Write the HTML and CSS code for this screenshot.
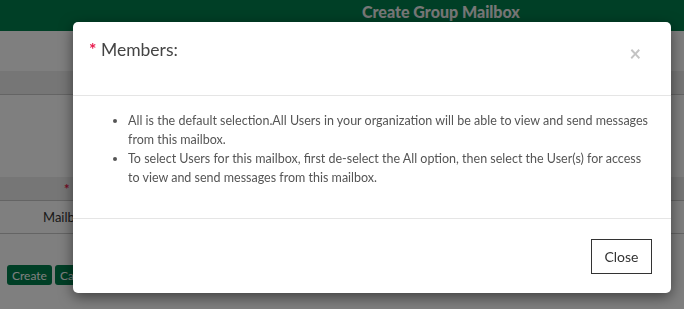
FILE: index.html
```html
<!DOCTYPE html>
<html lang="en">
<head>
  <meta charset="UTF-8">
  <title>Create Group Mailbox</title>
  <link rel="stylesheet" href="styles.css">
</head>
<body>

<header class="top-bar">Create Group Mailbox</header>

<div class="page">
  <div class="form-row"></div>
  <div class="form-row shaded"></div>
  <div class="form-row tall"></div>
  <div class="form-row shaded">
    <span class="field-label"><span class="req">*</span> Members:</span>
  </div>
  <div class="form-row name-row">
    <span class="field-label">Mailbox Name:</span>
  </div>
  <div class="actions">
    <button class="btn-green">Create</button>
    <button class="btn-green">Cancel</button>
  </div>
</div>

<div class="backdrop"></div>

<!-- Members help dialog -->
<div class="modal">
  <div class="modal-header">
    <h4><span class="req">*</span> Members:</h4>
    <span class="close-x">&times;</span>
  </div>
  <div class="modal-body">
    <ul>
      <li>All is the default selection.All Users in your organization will be able to view and send messages from this mailbox.</li>
      <li>To select Users for this mailbox, first de-select the All option, then select the User(s) for access to view and send messages from this mailbox.</li>
    </ul>
  </div>
  <div class="modal-footer">
    <button class="btn-close">Close</button>
  </div>
</div>

</body>
</html>
```

FILE: styles.css
```css
body {
  margin: 0;
  font-family: 'Lato', 'Liberation Sans', sans-serif;
  background-color: #fff;
  height: 309px;
  overflow: hidden;
}
.top-bar {
  background-color: #007e4c;
  color: #eeeeee;
  height: 31px;
  box-sizing: border-box;
  padding: 2px 0 0 362px;
  font-weight: 900;
  font-size: 16px;
}
.page {
  display: flex;
  flex-direction: column;
}
.form-row {
  height: 40px;
  display: flex;
  align-items: center;
}
.form-row.shaded {
  height: 23px;
  background-color: #ececec;
  border-bottom: 1px solid #c8c8c8;
}
.form-row.tall {
  height: 82px;
}
.name-row {
  height: 32px;
  border-bottom: 1px solid #c8c8c8;
}
.field-label {
  width: 140px;
  text-align: left;
  padding-left: 43px;
  font-size: 13px;
  color: #333;
}
.form-row.shaded .field-label {
  padding-left: 64px;
}
.req {
  color: #e8174a;
  font-weight: bold;
}
.actions {
  display: flex;
  gap: 3px;
  padding: 31px 0 0 7px;
}
.btn-green {
  background-color: #007e4c;
  color: #fff;
  border: none;
  border-radius: 3px;
  font-family: 'Lato', sans-serif;
  font-size: 12px;
  height: 20px;
  padding: 0 5px;
}
.backdrop {
  position: fixed;
  inset: 0;
  background: rgba(0, 0, 0, 0.5);
}
.modal {
  position: absolute;
  left: 73px;
  top: 22px;
  width: 598px;
  height: 271px;
  background: #fff;
  border-radius: 5px;
  box-shadow: 0 4px 14px rgba(0,0,0,0.5);
  display: flex;
  flex-direction: column;
}
.modal-header {
  height: 74px;
  box-sizing: border-box;
  border-bottom: 1px solid #e5e5e5;
  padding: 17px 30px 0 16px;
  display: flex;
  justify-content: space-between;
}
.modal-header h4 {
  margin: 0;
  font-weight: normal;
  font-size: 17.5px;
  color: #444;
}
.close-x {
  font-size: 20px;
  font-weight: bold;
  color: #c4c4c4;
  margin-top: 2px;
}
.modal-body {
  height: 123px;
  box-sizing: border-box;
  border-bottom: 1px solid #e5e5e5;
  padding: 15px 18px 0 20px;
}
.modal-body ul {
  margin: 0;
  padding-left: 35px;
  font-size: 12.5px;
  line-height: 19px;
  color: #555;
}
.modal-footer {
  flex: 1;
  display: flex;
  justify-content: flex-end;
  align-items: center;
  padding-right: 19px;
}
.btn-close {
  width: 61px;
  height: 35px;
  background: #fff;
  border: 1px solid #333;
  font-family: 'Lato', sans-serif;
  font-size: 14px;
  color: #333;
}
```
